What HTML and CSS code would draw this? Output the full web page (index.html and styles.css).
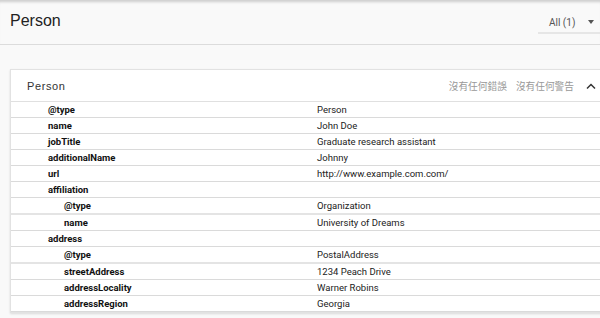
FILE: index.html
```html
<!DOCTYPE HTML>
<html>
<head>
    <meta charset="utf-8">
    <link rel="stylesheet" href="styles.css">
</head>
<body>
    <div class="topbar">
        <h1 class="title">Person</h1>
        <div class="filter">
            <span class="filter-label">All (1)</span>
            <span class="filter-caret"></span>
        </div>
    </div>

    <div class="card">
        <div class="card-head">
            <span class="card-title">Person</span>
            <span class="status">沒有任何錯誤</span>
            <span class="status">沒有任何警告</span>
            <svg class="chevron" width="12" height="8" viewBox="0 0 12 8">
                <path d="M2 6.5 L6 2.5 L10 6.5" fill="none" stroke="#333" stroke-width="1.5"/>
            </svg>
        </div>
        <div class="rows">
            <div class="row"><span class="key">@type</span><span class="val">Person</span></div>
            <div class="row"><span class="key">name</span><span class="val">John Doe</span></div>
            <div class="row"><span class="key">jobTitle</span><span class="val">Graduate research assistant</span></div>
            <div class="row"><span class="key">additionalName</span><span class="val">Johnny</span></div>
            <div class="row"><span class="key">url</span><span class="val">http://www.example.com.com/</span></div>
            <div class="row"><span class="key">affiliation</span><span class="val"></span></div>
            <div class="row"><span class="key sub">@type</span><span class="val">Organization</span></div>
            <div class="row"><span class="key sub">name</span><span class="val">University of Dreams</span></div>
            <div class="row"><span class="key">address</span><span class="val"></span></div>
            <div class="row"><span class="key sub">@type</span><span class="val">PostalAddress</span></div>
            <div class="row"><span class="key sub">streetAddress</span><span class="val">1234 Peach Drive</span></div>
            <div class="row"><span class="key sub">addressLocality</span><span class="val">Warner Robins</span></div>
            <div class="row"><span class="key sub">addressRegion</span><span class="val">Georgia</span></div>
        </div>
    </div>
</body>
</html>
```

FILE: styles.css
```css
body {
    margin: 0;
    background-color: #f9f9f9;
    font-family: Roboto, "Liberation Sans", "Noto Sans CJK TC", sans-serif;
    overflow: hidden;
    width: 600px;
    height: 318px;
}

.topbar {
    display: flex;
    align-items: center;
    height: 45px;
    padding-left: 10px;
    border-bottom: 1px solid #dcdcdc;
    box-shadow: inset 0 4px 3px -2px rgba(0, 0, 0, 0.18);
    box-sizing: border-box;
}

.title {
    margin: 0;
    flex: 1;
    font-family: "Liberation Sans", Arial, sans-serif;
    font-size: 16px;
    font-weight: normal;
    color: #222;
    padding-bottom: 2px;
}

.filter {
    display: flex;
    align-items: center;
    width: 62px;
    height: 22px;
    margin-top: 2px;
    padding-left: 11px;
    border-bottom: 2px solid #e6e6e6;
    box-sizing: border-box;
}

.filter-label {
    font-size: 10px;
    color: #555;
    flex: 1;
}

.filter-caret {
    width: 0;
    height: 0;
    margin-right: 6px;
    border-left: 3.5px solid transparent;
    border-right: 3.5px solid transparent;
    border-top: 4px solid #555;
}

.card {
    margin: 24px 0 0 10px;
    width: 600px;
    background-color: #fff;
    border: 1px solid #e2e2e2;
    box-shadow: 0 1px 2px rgba(0, 0, 0, 0.12);
}

.card-head {
    display: flex;
    align-items: center;
    height: 31px;
    padding-left: 16px;
    border-bottom: 1px solid #e0e0e0;
}

.card-title {
    flex: 1;
    font-family: "Liberation Sans", Arial, sans-serif;
    font-size: 11px;
    letter-spacing: 0.6px;
    color: #333;
}

.status {
    font-family: "Noto Sans CJK TC", sans-serif;
    font-size: 9.7px;
    color: #999;
    margin-right: 9px;
}

.chevron {
    margin: 0 14px 0 2px;
}

.row {
    display: grid;
    grid-template-columns: 306px 1fr;
    height: 16px;
    line-height: 16px;
    border-bottom: 1px solid #dadada;
    box-sizing: border-box;
    font-size: 9.5px;
}

.row:nth-child(7),
.row:nth-child(10) {
    height: 17px;
    border-bottom-width: 2px;
    border-bottom-color: #e4e4e4;
}

.key {
    padding-left: 37px;
    font-weight: bold;
    color: #111;
}

.key.sub {
    padding-left: 53px;
}

.val {
    color: #222;
}
```
